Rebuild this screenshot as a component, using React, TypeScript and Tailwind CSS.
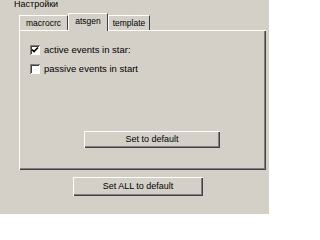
import React from "react";

const raised =
  "shadow-[inset_1px_1px_#ffffff,inset_-1px_-1px_#404040,inset_-2px_-2px_#808080]";

function Tab({ label, selected, w }: { label: string; selected?: boolean; w: string }) {
  return (
    <div
      className={
        selected
          ? `relative z-10 -mb-[1px] h-[18px] bg-[#d4d0c8] ${w} flex items-start justify-center pt-[3px] border-t border-l border-white border-r border-r-[#404040]`
          : `h-[15px] bg-[#d4d0c8] ${w} flex items-start justify-center pt-[3px] border-t border-l border-white border-r border-r-[#404040]`
      }
    >
      <span className="leading-[9px] text-[8.5px]">{label}</span>
    </div>
  );
}

function Check({ checked, label }: { checked?: boolean; label: string }) {
  return (
    <div className="flex items-center h-[10px] gap-[4px]">
      <div className="w-[10px] h-[10px] bg-white shadow-[inset_1px_1px_#808080,inset_-1px_-1px_#ffffff,inset_2px_2px_#404040] flex items-center justify-center">
        {checked && (
          <svg width="8" height="8" viewBox="0 0 8 8">
            <path d="M1 3.5 L3 5.5 L7 1.5" stroke="#000" strokeWidth="1.6" fill="none" />
          </svg>
        )}
      </div>
      <span className="leading-[10px] text-[9.5px]">{label}</span>
    </div>
  );
}

export default function App() {
  return (
    <div className="w-[269px] h-[214px] bg-[#d4d0c8] overflow-hidden text-black text-[9px] font-['Liberation_Sans',Arial,sans-serif]">
      <div className="pl-[14px] h-[13px] leading-[9px]">Настройки</div>
      <div className="ml-[19px] w-[247px]">
        <div className="flex items-end h-[17px]">
          <Tab label="macrocrc" w="w-[49px]" />
          <Tab label="atsgen" w="w-[40px]" selected />
          <Tab label="template" w="w-[42px]" />
        </div>
        <div className={`h-[140px] bg-[#d4d0c8] ${raised} pt-[15px] pl-[11px] flex flex-col`}>
          <div className="flex flex-col gap-[9px]">
            <Check checked label="active events in star:" />
            <Check label="passive events in start" />
          </div>
          <button
            className={`mt-[57px] ml-[54px] w-[136px] h-[17px] bg-[#d4d0c8] ${raised} flex items-center justify-center leading-[9px]`}
          >
            Set to default
          </button>
        </div>
      </div>
      <button
        className={`mt-[7px] ml-[73px] w-[130px] h-[19px] bg-[#d4d0c8] ${raised} flex items-center justify-center leading-[9px]`}
      >
        Set ALL to default
      </button>
    </div>
  );
}
